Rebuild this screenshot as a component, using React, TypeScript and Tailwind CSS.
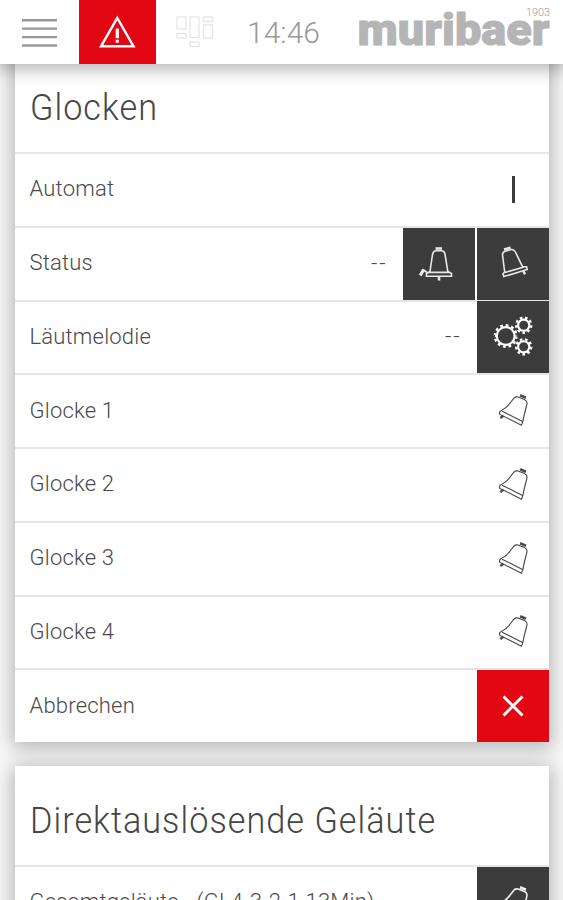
import type { ReactNode } from "react"

const bells = ["Glocke 1", "Glocke 2", "Glocke 3", "Glocke 4"]

function BellStill() {
  return (
    <svg viewBox="0 0 72 72" className="w-[72px] h-[72px]" fill="none" stroke="#e8e8e8" strokeWidth="1.6">
      <path d="M32.5 20.5h6.5" strokeWidth="2.6" />
      <path d="M27 43.5 L29.6 26 Q30.4 22.8 33 22.8 H38.6 Q41.3 22.8 42 26 L44.8 43.5 L48.5 45.5 V48.3 H23.5 V45.5 Z M26 44.4 H46" />
      <path d="M36 48.5v4" strokeWidth="2.6" />
      <path d="M17.3 47.5 L20.6 41.5" strokeWidth="3.2" />
      <path d="M20 41.5 L24 44.5" />
    </svg>
  )
}

function BellTilted() {
  return (
    <svg viewBox="0 0 72 72" className="w-[72px] h-[72px]" fill="none" stroke="#e8e8e8" strokeWidth="1.6">
      <path d="M27 21.5 L33.5 19.7" strokeWidth="2.8" />
      <path d="M27.7 44 L25.5 27 Q25.4 24 28.2 23.2 L34.3 21.5 Q37 21.2 38.4 24 L45.5 38.7 L49.6 38.8 L50.2 41.5 L26.8 48.6 L26 45.8 Z M28 44.4 L47 39" />
      <path d="M46.2 42.8 L48 46.4" strokeWidth="2.4" />
    </svg>
  )
}

function BellSwing({ color = "#4a4a4a", width = 1.15 }: { color?: string; width?: number }) {
  return (
    <svg viewBox="-0.5 0 72 72" className="w-[72px] h-[72px]" fill="none" stroke={color} strokeWidth={width}>
      <path d="M42.6 20.3 L48.4 22.7" strokeWidth="2.8" />
      <path d="M23.4 35.7 Q29 33.3 33 27.5 L36.6 23 Q38 21.5 40.5 22 L47 24.5 Q49.8 25.8 49.5 28.6 L48.2 34 Q46.3 41 45.4 46.4 L43.9 50.2 L22.4 39.4 Q21.2 36.8 23.4 35.7 Z M24.6 36.2 L45 46.5" />
      <path d="M26 40.8 L22.8 43" strokeWidth="2.4" />
    </svg>
  )
}

function Gear({ cx, cy, r, teeth }: { cx: number; cy: number; r: number; teeth: number }) {
  return (
    <g>
      <circle cx={cx} cy={cy} r={r} strokeWidth="2.1" />
      <circle cx={cx} cy={cy} r={r + 1.9} strokeWidth="2.4" pathLength={teeth * 2} strokeDasharray="1 1" />
    </g>
  )
}

function Gears() {
  return (
    <svg viewBox="0 0 72 72" className="w-[72px] h-[72px]" fill="none" stroke="#fff">
      <Gear cx={28.7} cy={35} r={8.9} teeth={12} />
      <Gear cx={46.7} cy={24.2} r={5.6} teeth={9} />
      <Gear cx={46.7} cy={45.8} r={5.6} teeth={9} />
    </svg>
  )
}

function Tile({ children, className = "bg-[#3c3c3c]" }: { children: ReactNode; className?: string }) {
  return <div className={`w-[72px] h-[72px] shrink-0 flex items-center justify-center ${className}`}>{children}</div>
}

function Row({ label, value, children }: { label: string; value?: string; children?: ReactNode }) {
  return (
    <div className="h-[73.75px] flex items-center gap-[2px] border-t-2 border-[#e6e6e6] text-[22px] text-[#4a4a4a]">
      <span className="flex-1 pl-[15px] pb-[2px] tracking-[0.2px] whitespace-nowrap">{label}</span>
      {value && <span className="pr-[13px] pb-px tracking-[2px]">{value}</span>}
      {children}
    </div>
  )
}

function Card({ title, children }: { title: string; children: ReactNode }) {
  return (
    <section className="bg-white shadow-[0_3px_18px_3px_rgba(0,0,0,0.27)]">
      <h2 className="h-[99px] pl-[15px] pt-[10px] flex items-center text-[37px] text-[#464646] tracking-[1.1px] whitespace-nowrap">
        <span className="origin-left scale-x-[0.925]">{title}</span>
      </h2>
      {children}
    </section>
  )
}

function Header() {
  return (
    <header className="relative z-10 h-16 flex items-center bg-white shadow-[0_2px_16px_3px_rgba(0,0,0,0.3)]">
      <svg viewBox="0 0 79 64" className="w-[79px] h-16" stroke="#989898" strokeWidth="2.4">
        <path d="M22 20.2h35M22 28.6h35M22 37.1h35M22 45.5h35" />
      </svg>
      <div className="w-[77px] h-16 bg-[#e30613]">
        <svg viewBox="0 0 77 64" className="w-[77px] h-16" fill="none" stroke="#fff">
          <path d="M38.3 18 L54.5 46.3 H22 Z" strokeWidth="2.4" />
          <path d="M38.3 28.5v9.8M38.3 39.8v3" strokeWidth="3.2" />
        </svg>
      </div>
      <svg viewBox="0 0 40 34" className="w-10 h-[34px] ml-5" fill="none" stroke="#e5e5e5" strokeWidth="1.3">
        <rect x="1" y="2" width="9" height="12" />
        <rect x="1" y="18.5" width="9" height="4.5" />
        <rect x="14" y="2" width="9" height="20.5" />
        <rect x="14" y="27" width="9" height="4.5" />
        <rect x="27.5" y="2" width="9" height="4.5" />
        <rect x="27.5" y="10" width="9" height="13" />
      </svg>
      <svg viewBox="0 0 333 64" className="w-[333px] h-16 ml-[14px]">
        <text x="17" y="42.5" fontSize="30" textLength="73" fill="#999">14:46</text>
        <text x="127.5" y="44.5" fontSize="44" fontWeight="900" textLength="192" lengthAdjust="spacingAndGlyphs" fill="#b5b5b5" stroke="#b5b5b5" strokeWidth="1">muribaer</text>
        <text x="296" y="15.5" fontSize="11" textLength="24" fill="#999">1903</text>
      </svg>
    </header>
  )
}

export default function App() {
  return (
    <div className="w-full h-[900px] overflow-hidden bg-[#f8f8f8] font-['Roboto',sans-serif] font-light">
      <Header />
      <main className="-mt-[11px] px-[14.5px] flex flex-col gap-[24px]">
        <Card title="Glocken">
          <Row label="Automat">
            <Tile className="bg-transparent"><span className="w-[3px] h-[27px] ml-px bg-[#3c3c3c]" /></Tile>
          </Row>
          <Row label="Status" value="--">
            <Tile><BellStill /></Tile>
            <Tile><BellTilted /></Tile>
          </Row>
          <Row label="Läutmelodie" value="--">
            <Tile><Gears /></Tile>
          </Row>
          {bells.map((name) => (
            <Row key={name} label={name}>
              <Tile className="bg-transparent"><BellSwing /></Tile>
            </Row>
          ))}
          <Row label="Abbrechen">
            <Tile className="bg-[#e30613]">
              <svg viewBox="0 0 22 22" className="w-[22px] h-[22px]" stroke="#fff" strokeWidth="3">
                <path d="M1.5 1.5 L20.5 20.5 M20.5 1.5 L1.5 20.5" />
              </svg>
            </Tile>
          </Row>
        </Card>
        <Card title="Direktauslösende Geläute">
          <Row label="Gesamtgeläute - (GL4-3-2-1 13Min)">
            <Tile><BellSwing color="#f0f0f0" width={1.6} /></Tile>
          </Row>
        </Card>
      </main>
    </div>
  )
}
